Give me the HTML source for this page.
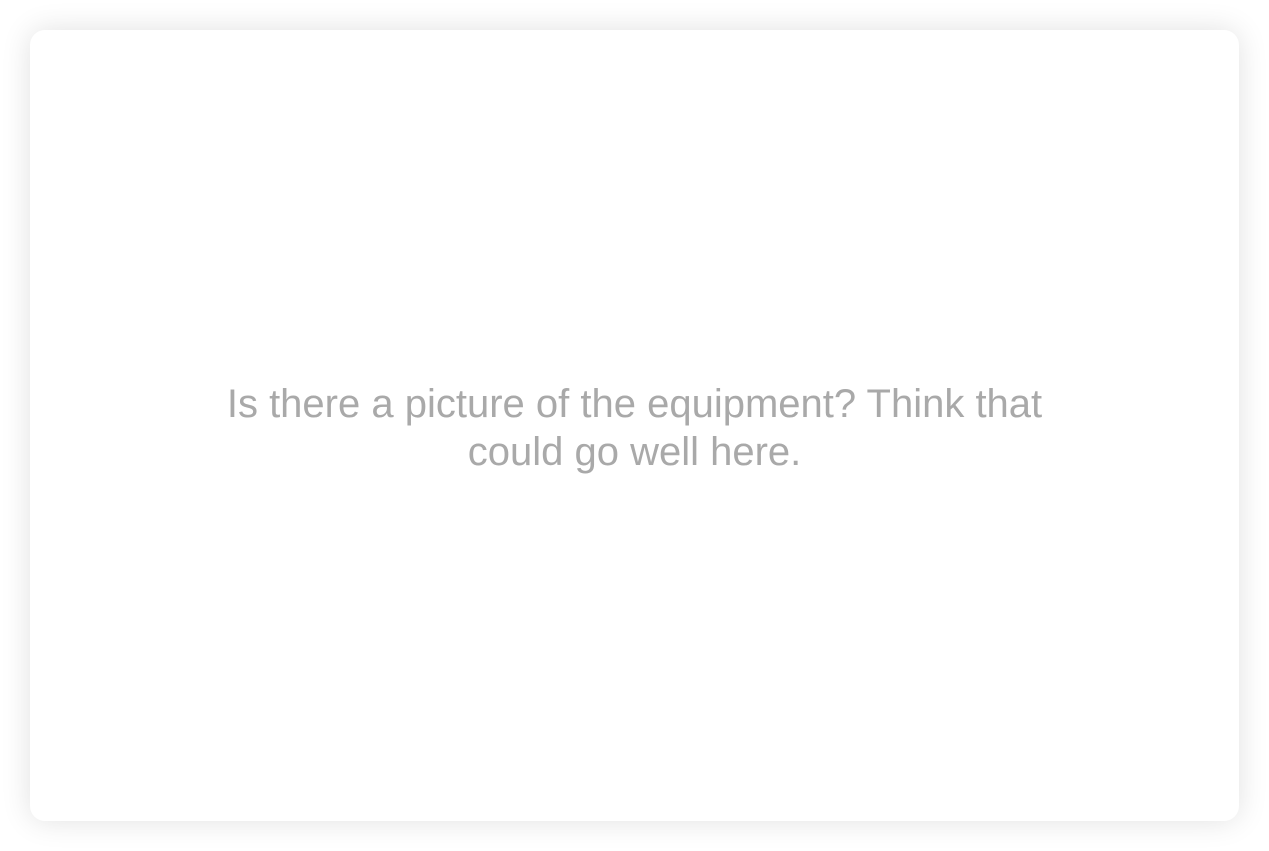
<!DOCTYPE html>
<html><head><meta charset="utf-8"><style>
html,body{margin:0;padding:0;width:1269px;height:851px;background:#fff;overflow:hidden}
.card{position:absolute;left:30px;top:30px;width:1209px;height:791px;background:#fff;border-radius:15px;box-shadow:0 0 30px rgba(0,0,0,0.12)}
.t{position:absolute;left:0;right:0;top:380px;text-align:center;font-family:"Liberation Sans",sans-serif;font-size:40px;line-height:48px;color:#a9a9a9}
</style></head><body>
<div class="card"></div>
<div class="t">Is there a picture of the equipment? Think that<br>could go well here.</div>
</body></html>
